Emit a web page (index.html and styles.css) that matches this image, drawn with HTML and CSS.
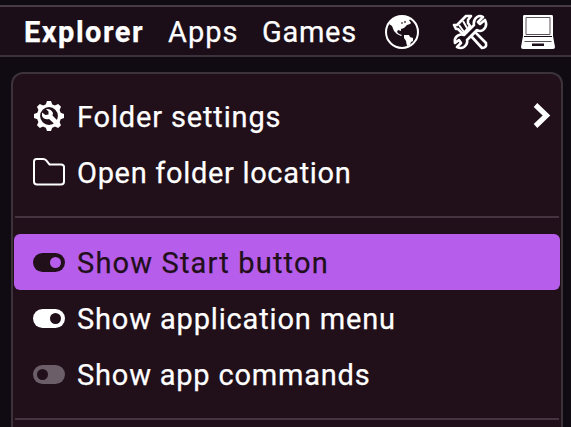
FILE: index.html
```html
<!DOCTYPE html>
<html lang="en">
<head>
<meta charset="utf-8">
<title>Explorer menu</title>
<link rel="stylesheet" href="styles.css">
</head>
<body>
<nav class="bar">
  <span class="bar-item bar-title"><span class="t-explorer">Explorer</span></span>
  <span class="bar-item bar-apps"><span class="t-apps">Apps</span></span>
  <span class="bar-item bar-games"><span class="t-games">Games</span></span>
  <svg class="bar-icon" viewBox="0 0 34 34">
    <circle cx="17" cy="17" r="16" fill="none" stroke="#fff" stroke-width="2"/>
    <path fill="#fff" d="M4 9Q9 1 17 1Q23 1 27 4L24 5L26 8L25 9L22 10L19 13L16 14L16 16L13 15L12 17L14 19L17 20L16 21L12 19L9 16L7 11Z"/>
    <path fill="#fff" d="M19 20L24 20L25 22L28 23L28 26L26 27L25 30L22 31L21 26L19 23Z"/>
    <path d="M16 8H18M20 6V8" fill="none" stroke="#1b0e18" stroke-width="1.200"/>
  </svg>
  <svg class="bar-icon icon-tools" viewBox="0 0 36 36">
    <g fill="#1b0e18" stroke="#fff" stroke-width="2.6" stroke-linejoin="round">
      <path d="M2 11L5 11L12 4L14 2L19 2L16 6V9L18 12L11 20L6 15L4 15Z"/>
      <path d="M11 7L15 14M7 11L12 18" fill="none" stroke-width="2"/>
      <path d="M19 22L23 18L34 29Q35 34 30 34Z"/>
      <path d="M31 3L26 8L28 10L33 6Q36 12 31 16Q28 18 25 16L15 26Q16 30 12 33Q9 35 5 33L9 29L7 26L3 29Q2 23 7 21Q9 20 12 21L22 11Q21 6 25 3Q28 1 31 3Z"/>
    </g>
  </svg>
  <svg class="bar-icon icon-laptop" viewBox="0 0 34 34">
    <path fill="#fff" d="M3 0H31Q32 0 32 2V21L34 32Q34 34 32 34H2Q0 34 0 32L2 21V2Q2 0 3 0Z"/>
    <path d="M5 2.500H29V19.500H5Z" fill="none" stroke="#5c5159" stroke-width="1"/>
    <path d="M3 21.500H31" stroke="#1b0e18" stroke-width="1"/>
    <path d="M3.500 26.500H30.500" stroke="#5c5159" stroke-width="1"/>
    <path d="M11 28.500H23V31H11Z" fill="#1b0e18"/>
  </svg>
</nav>
<main class="menu">
  <div class="row">
    <svg class="icon" viewBox="0 0 32 32">
      <circle cx="16" cy="16" r="10.500" fill="none" stroke="#fff" stroke-width="3.200"/>
      <g fill="#fff"><path id="tooth" d="M12.500 5L14 1H18L19.500 5Z"/>
      <use href="#tooth" transform="rotate(45 16 16)"/><use href="#tooth" transform="rotate(90 16 16)"/><use href="#tooth" transform="rotate(135 16 16)"/><use href="#tooth" transform="rotate(180 16 16)"/><use href="#tooth" transform="rotate(225 16 16)"/><use href="#tooth" transform="rotate(270 16 16)"/><use href="#tooth" transform="rotate(315 16 16)"/></g>
      <path fill="#fff" d="M13 9Q18 8.500 20 13L19.500 15.500L25 21L21.500 24L16 19Q11 20 9 16L9 12.500L12.500 15L15.500 14.500L15.500 11.500Z"/>
    </svg>
    <span class="label t-folder">Folder settings</span>
    <svg class="chevron" viewBox="0 0 18 28"><path d="M2.500 3L13.500 13.500L2.500 24" fill="none" stroke="#fff" stroke-width="5.200"/></svg>
  </div>
  <div class="row">
    <svg class="icon" viewBox="0 0 32 32"><path d="M1 25.500V5.500Q1 3 3.500 3H10Q12 3 13 4.200L16.500 8.500H28Q31 8.500 31 11V25.500Q31 28.500 28 28.500H4Q1 28.500 1 25.500Z" fill="none" stroke="#fff" stroke-width="2"/></svg>
    <span class="label t-open">Open folder location</span>
  </div>
  <hr class="separator">
  <div class="row selected">
    <span class="toggle on"></span>
    <span class="label t-start">Show Start button</span>
  </div>
  <div class="row">
    <span class="toggle on"></span>
    <span class="label t-menu">Show application menu</span>
  </div>
  <div class="row">
    <span class="toggle off"></span>
    <span class="label t-commands">Show app commands</span>
  </div>
  <hr class="separator">
</main>
</body>
</html>
```
FILE: styles.css
```css
* { box-sizing: border-box; }
body {
  margin: 0;
  padding-top: 5px;
  height: 427px;
  overflow: hidden;
  background: #100b12;
  color: #fff;
  font-family: Roboto, "Liberation Sans", sans-serif;
  font-size: 29px;
  line-height: 34px;
  -webkit-text-stroke: 0.25px currentColor;
}
.bar {
  display: flex;
  align-items: center;
  height: 52px;
  padding-left: 24px;
  background: #1b0e18;
  border-top: 2px solid #463c45;
  border-bottom: 2px solid #3b323b;
}
.bar-item { flex: none; white-space: nowrap; padding-top: 2px; }
.bar-title { width: 144px; font-weight: 700; }
.bar-apps { width: 94px; }
.bar-games { width: 123px; }
.bar-icon { flex: none; width: 34px; height: 34px; margin-top: 2px; }
.icon-tools { width: 36px; height: 36px; margin-left: 33px; }
.icon-laptop { margin-left: 33px; }
.menu {
  width: 552px;
  height: 370px;
  margin: 15px 0 0 11px;
  padding: 14px 1px 0;
  background: #210f1a;
  border: 2px solid #3b323a;
  border-bottom: 0;
  border-radius: 12px 12px 0 0;
}
.row {
  display: flex;
  align-items: center;
  height: 56px;
  padding: 0 9px 0 19px;
  border-radius: 6px;
}
.icon { flex: none; width: 32px; height: 32px; }
.label { margin-left: 12px; padding-top: 2px; white-space: nowrap; }
.chevron { width: 18px; height: 28px; margin-left: auto; }
.separator {
  height: 2px;
  margin: 16px 1px;
  border: 0;
  background: #43343f;
}
.selected { background: #b65eeb; color: #210f1a; }
.toggle {
  display: flex;
  align-items: center;
  flex: none;
  width: 32px;
  height: 19px;
  padding: 0 4px;
  border-radius: 10px;
  background: #fff;
}
.toggle::before {
  content: "";
  width: 11px;
  height: 11px;
  border-radius: 50%;
  background: #210f1a;
}
.on { justify-content: flex-end; }
.off { background: #6b5e68; }
.selected .toggle { background: #210f1a; }
.selected .toggle::before { background: #b65eeb; }

.t-explorer { letter-spacing: 1.5px; }
.t-apps { letter-spacing: 1px; }
.t-games { letter-spacing: 0.7px; }
.t-folder { letter-spacing: 0.84px; }
.t-open { letter-spacing: 0.68px; }
.t-start { letter-spacing: 1.17px; }
.t-menu { letter-spacing: 0.84px; }
.t-commands { letter-spacing: 0.8px; }
```
